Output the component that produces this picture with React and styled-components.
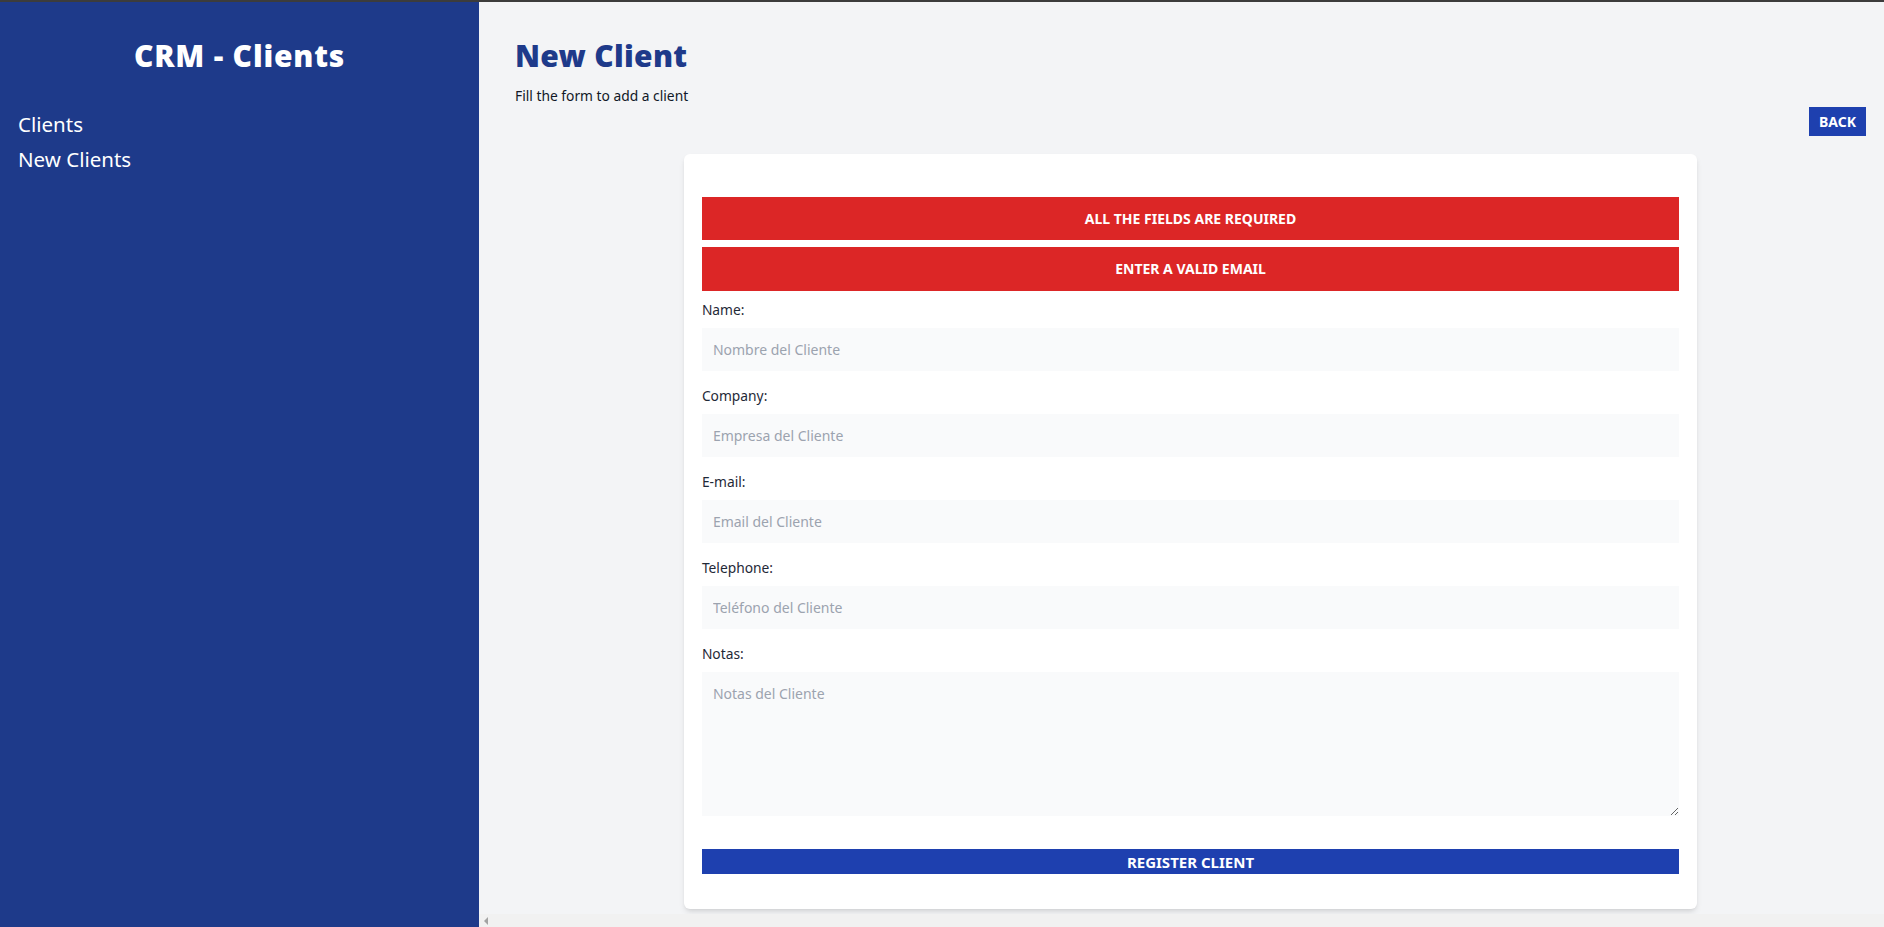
import React from 'react'
import styled, { createGlobalStyle } from 'styled-components'

const GlobalStyle = createGlobalStyle`
	* {
		box-sizing: border-box;
	}

	body {
		margin: 0;
		font-family: 'Noto Sans', 'Open Sans', sans-serif;
		background-color: #f3f4f6;
	}
`

const Layout = styled.div`
	display: flex;
	height: 100vh;
	border-top: 2px solid #3c3c3c;
	overflow: hidden;
`

const Sidebar = styled.aside`
	width: 479px;
	flex-shrink: 0;
	padding: 36px 18px;
	background-color: #1e3a8a;
`

const Brand = styled.h2`
	margin: 0;
	font-size: 30px;
	line-height: 36px;
	font-weight: 900;
	letter-spacing: 0.8px;
	text-align: center;
	color: #ffffff;
`

const Nav = styled.nav`
	display: flex;
	flex-direction: column;
	gap: 6px;
	margin-top: 36px;
`

const NavLink = styled.a`
	font-size: 20.5px;
	line-height: 29px;
	color: #ffffff;
	text-decoration: none;
	cursor: pointer;
`

const Main = styled.main`
	flex: 1;
	display: flex;
	flex-direction: column;
	min-width: 0;
`

const Content = styled.div`
	flex: 1;
	overflow: hidden;
	padding: 36px 18px 0 36px;
`

const Heading = styled.h1`
	margin: 0;
	font-size: 30px;
	line-height: 36px;
	font-weight: 900;
	letter-spacing: 0.3px;
	color: #1e3a8a;
`

const Subtitle = styled.p`
	margin: 11px 0 0;
	font-size: 13.8px;
	line-height: 21.6px;
	color: #111827;
`

const Toolbar = styled.div`
	display: flex;
	justify-content: flex-end;
`

const BackButton = styled.button`
	height: 29px;
	padding: 0 10px;
	border: none;
	background-color: #1e40af;
	color: #ffffff;
	font-family: inherit;
	font-size: 14px;
	font-weight: 700;
	text-transform: uppercase;
	cursor: pointer;
`

const Card = styled.form`
	width: 75%;
	margin: 18px auto 0;
	padding: 43px 18px 35px;
	background-color: #ffffff;
	border-radius: 6px;
	box-shadow: 0 4px 6px -1px rgba(0, 0, 0, 0.1), 0 2px 4px -2px rgba(0, 0, 0, 0.1);
`

const Alert = styled.div`
	padding: 11px;
	margin-top: ${props => (props.first ? '0' : '7px')};
	background-color: #dc2626;
	color: #ffffff;
	font-size: 14px;
	line-height: 21.6px;
	font-weight: 700;
	text-align: center;
	text-transform: uppercase;
`

const Field = styled.div`
	margin-top: ${props => (props.first ? '8px' : '14.4px')};
`

const Label = styled.label`
	display: block;
	font-size: 13.8px;
	line-height: 21.6px;
	color: #1f2937;
`

const Input = styled.input`
	display: block;
	width: 100%;
	height: 43px;
	margin-top: 7.2px;
	padding: 0 11px;
	border: none;
	outline: none;
	background-color: #f9fafb;
	font-family: inherit;
	font-size: 14px;
	color: #111827;

	&::placeholder {
		color: #9ca3af;
	}
`

const TextArea = styled.textarea`
	display: block;
	width: 100%;
	height: 144px;
	margin-top: 7.2px;
	padding: 11px;
	border: none;
	outline: none;
	background-color: #f9fafb;
	font-family: inherit;
	font-size: 14px;
	line-height: 21.6px;

	&::placeholder {
		color: #9ca3af;
	}
`

const SubmitButton = styled.button`
	display: block;
	width: 100%;
	height: 25px;
	margin-top: 33px;
	padding: 0;
	border: none;
	background-color: #1e40af;
	color: #ffffff;
	font-family: inherit;
	font-size: 15px;
	font-weight: 700;
	text-transform: uppercase;
	cursor: pointer;
`

const ScrollTrack = styled.div`
	display: flex;
	align-items: center;
	height: 13px;
	padding-left: 5px;
	background-color: #f1f1f1;
`

const ScrollArrow = styled.span`
	width: 0;
	height: 0;
	border-top: 4px solid transparent;
	border-bottom: 4px solid transparent;
	border-right: 4px solid #a3a3a3;
`

const fields = [
	{ id: 'name', label: 'Name:', placeholder: 'Nombre del Cliente', type: 'text' },
	{ id: 'company', label: 'Company:', placeholder: 'Empresa del Cliente', type: 'text' },
	{ id: 'email', label: 'E-mail:', placeholder: 'Email del Cliente', type: 'email' },
	{ id: 'phone', label: 'Telephone:', placeholder: 'Teléfono del Cliente', type: 'tel' },
]

const App = () => {
	return (
		<>
			<GlobalStyle />
			<Layout>
				<Sidebar>
					<Brand>CRM - Clients</Brand>
					<Nav>
						<NavLink>Clients</NavLink>
						<NavLink>New Clients</NavLink>
					</Nav>
				</Sidebar>
				<Main>
					<Content>
						<Heading>New Client</Heading>
						<Subtitle>Fill the form to add a client</Subtitle>
						<Toolbar>
							<BackButton type='button'>Back</BackButton>
						</Toolbar>
						<Card onSubmit={e => e.preventDefault()}>
							<Alert first>All the fields are required</Alert>
							<Alert>Enter a valid email</Alert>
							{fields.map((f, i) => (
								<Field key={f.id} first={i === 0}>
									<Label htmlFor={f.id}>{f.label}</Label>
									<Input id={f.id} type={f.type} placeholder={f.placeholder} />
								</Field>
							))}
							<Field>
								<Label htmlFor='notes'>Notas:</Label>
								<TextArea id='notes' placeholder='Notas del Cliente' />
							</Field>
							<SubmitButton type='submit'>Register Client</SubmitButton>
						</Card>
					</Content>
					<ScrollTrack>
						<ScrollArrow />
					</ScrollTrack>
				</Main>
			</Layout>
		</>
	)
}

export default App
